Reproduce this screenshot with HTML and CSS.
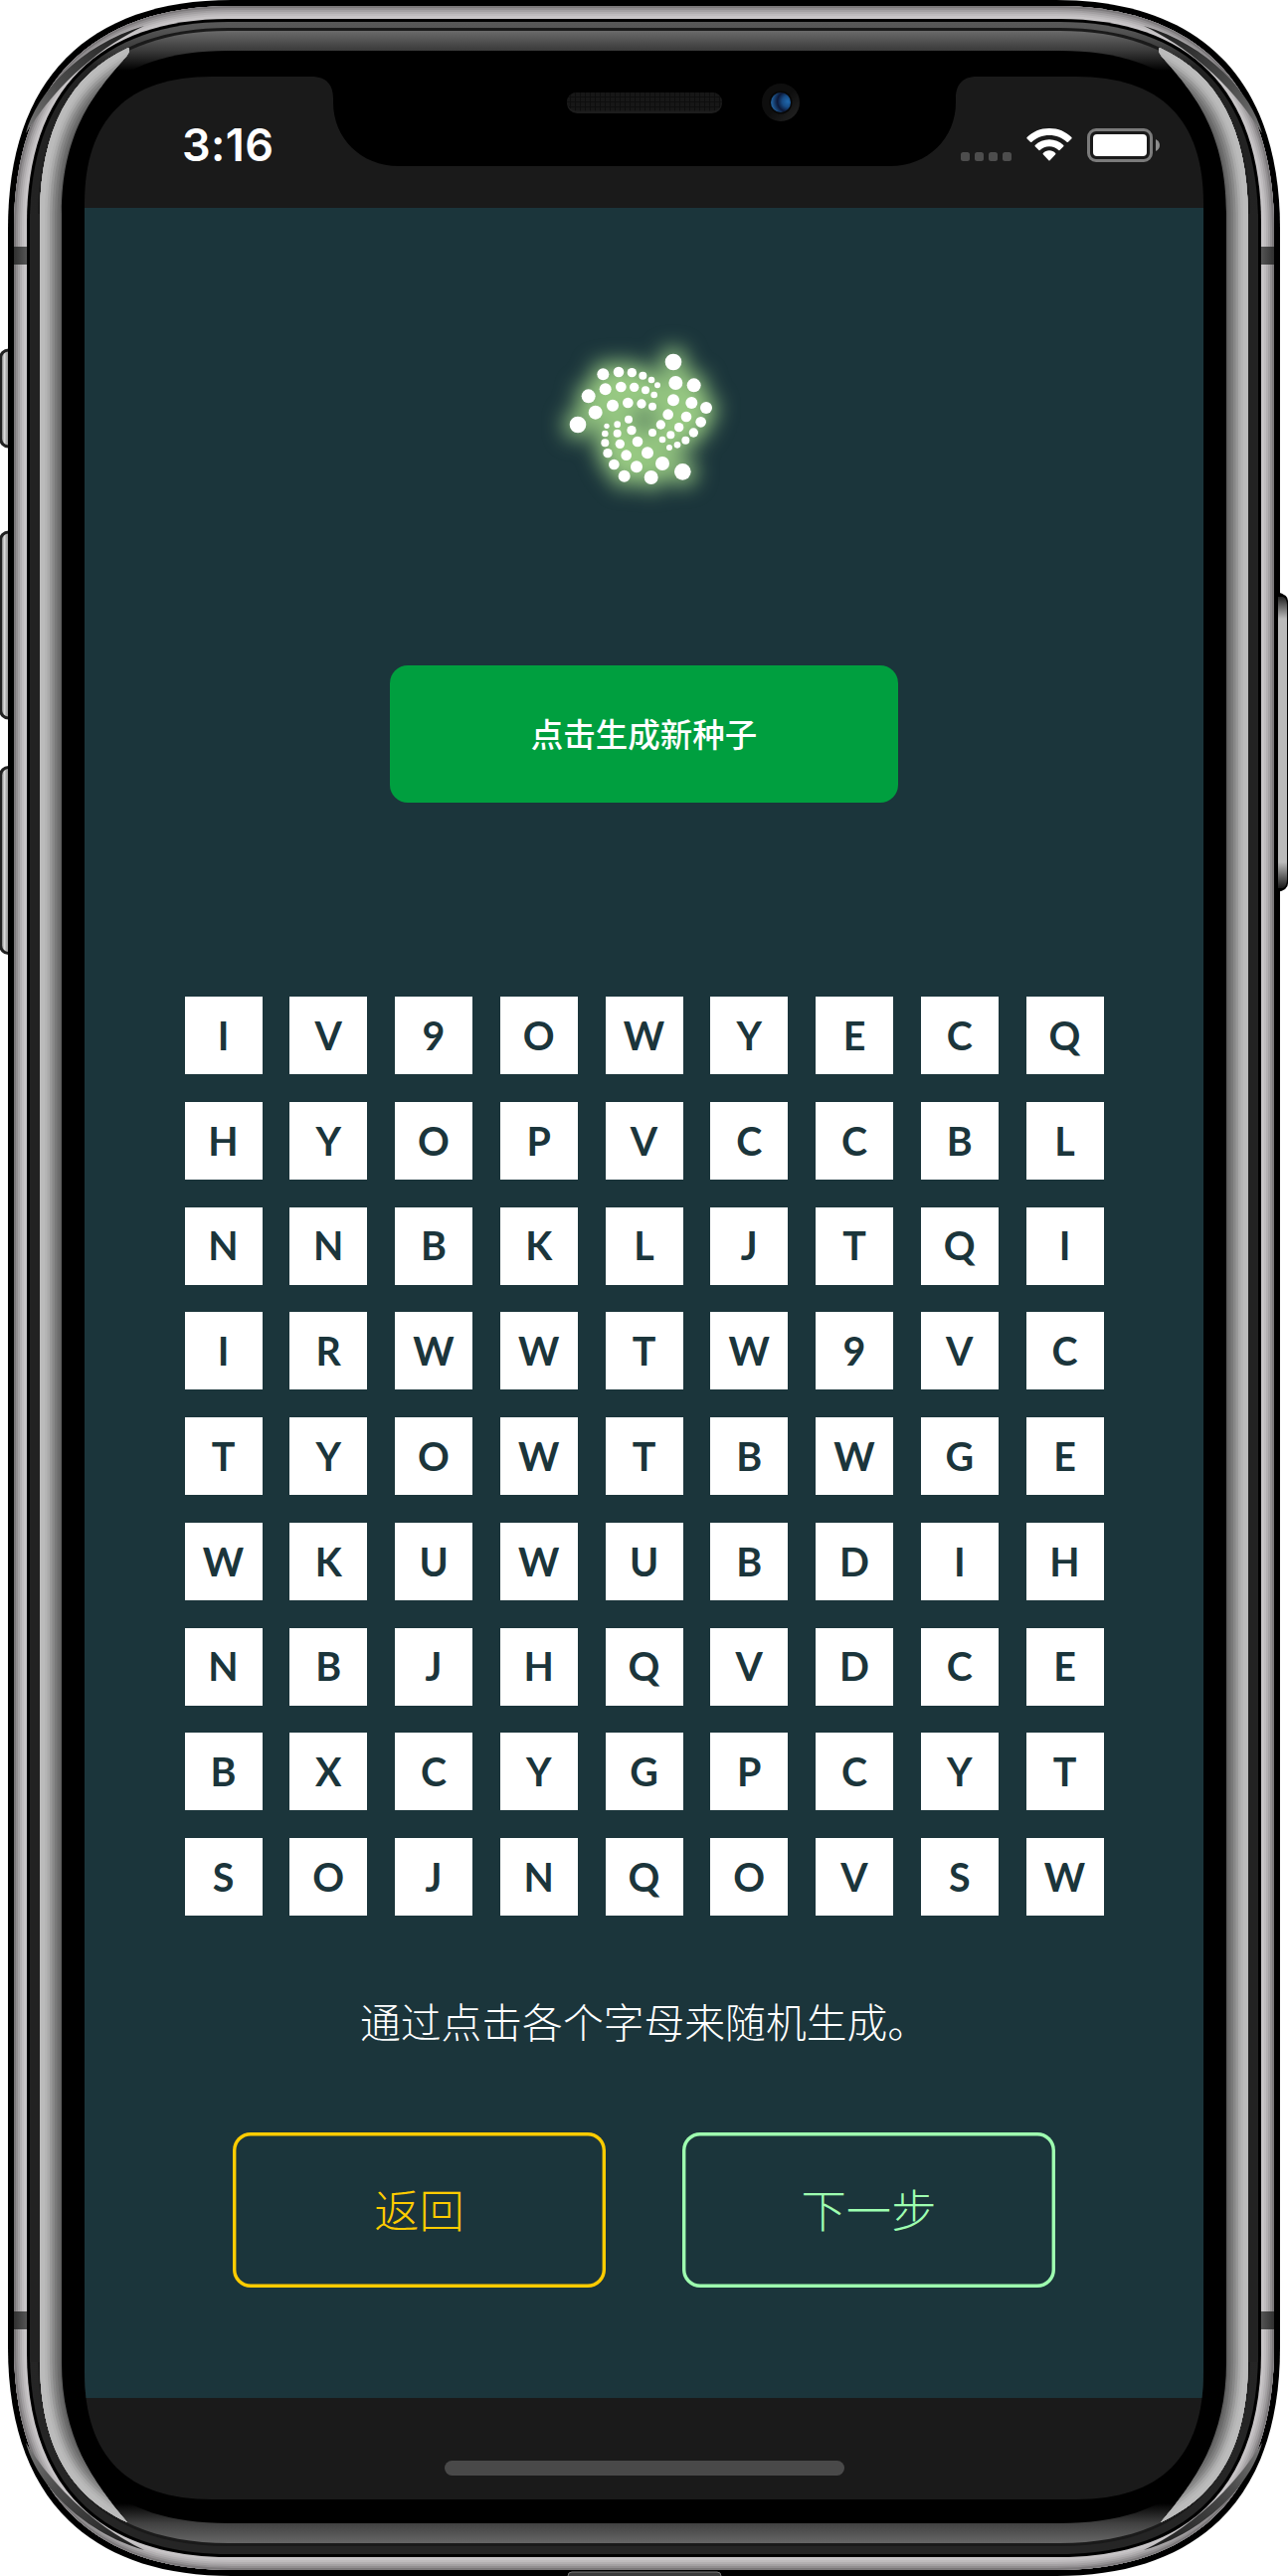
FILE: index.html
```html
<!DOCTYPE html>
<html lang="zh-CN">
<head>
<meta charset="utf-8">
<title>Seed</title>
<link rel="stylesheet" href="styles.css">
</head>
<body>
<main class="phone">
  <svg class="frame" viewBox="0 0 1295 2590" aria-hidden="true">
    <defs>
      <linearGradient id="gD" x1="0" y1="22" x2="0" y2="2568" gradientUnits="userSpaceOnUse">
        <stop offset="0" stop-color="#585858"/><stop offset=".003" stop-color="#555"/><stop offset=".018" stop-color="#222"/><stop offset="1" stop-color="#252525"/>
      </linearGradient>
      <linearGradient id="gTop" x1="0" y1="31" x2="0" y2="71" gradientUnits="userSpaceOnUse">
        <stop offset="0" stop-color="#6a6a6a"/><stop offset=".5" stop-color="#3a3a3a"/><stop offset="1" stop-color="#000"/>
      </linearGradient>
      <linearGradient id="gBot" x1="0" y1="2557" x2="0" y2="2517" gradientUnits="userSpaceOnUse">
        <stop offset="0" stop-color="#666"/><stop offset=".5" stop-color="#414141"/><stop offset="1" stop-color="#000"/>
      </linearGradient>
      <linearGradient id="gKey" x1="0" y1="0" x2="11" y2="0" gradientUnits="userSpaceOnUse">
        <stop offset="0" stop-color="#333"/><stop offset=".2" stop-color="#888"/><stop offset=".4" stop-color="#ddd"/><stop offset=".6" stop-color="#aaa"/><stop offset=".9" stop-color="#888"/><stop offset="1" stop-color="#333"/>
      </linearGradient>
      <linearGradient id="gPow" x1="0" y1="595" x2="0" y2="897" gradientUnits="userSpaceOnUse">
        <stop offset="0" stop-color="#000"/><stop offset=".09" stop-color="#bbb"/><stop offset=".9" stop-color="#bbb"/><stop offset="1" stop-color="#000"/>
      </linearGradient>
      <linearGradient id="gWedge" x1="26" y1="134" x2="140" y2="30" gradientUnits="userSpaceOnUse">
        <stop offset="0" stop-color="#777"/><stop offset=".35" stop-color="#4c4c4c"/><stop offset="1" stop-color="#1c1c1c"/>
      </linearGradient>
      <linearGradient id="gBand" x1="14" y1="0" x2="27" y2="0" gradientUnits="userSpaceOnUse">
        <stop offset="0" stop-color="#303030"/><stop offset="1" stop-color="#555"/>
      </linearGradient>
      <path id="pB" d="M14 230C14 84 92 6 233 6H1062C1203 6 1281 84 1281 230V2360C1281 2506 1203 2584 1062 2584H233C92 2584 14 2506 14 2360Z"/>
      <path id="pWedge" d="M26 134C36 95 80 45 145 26C105 45 60 80 26 134Z"/>
      <path id="pEdge" d="M131 47C70 75 41 130 40 215V2375C41 2460 70 2509 130 2537"/>
      <clipPath id="cB"><use href="#pB"/></clipPath>
      <clipPath id="cSide"><path d="M40 215C41 130 70 75 129 48Q132 51 126 58C93 95 62 135 62 215V2375C62 2450 93 2495 128 2536C70 2509 41 2460 40 2375Z"/></clipPath>
    </defs>

    <!-- volume and mute keys -->
    <g fill="url(#gKey)" stroke="#222" stroke-width="3">
      <rect x="0.5" y="352" width="20" height="97" rx="8"/>
      <rect x="0.5" y="535" width="20" height="187" rx="8"/>
      <rect x="0.5" y="771.500" width="20" height="187" rx="8"/>
    </g>

    <!-- steel body -->
    <path d="M8 230C8 80 88 0 233 0H1062C1207 0 1287 80 1287 230V2360C1287 2510 1207 2590 1062 2590H233C88 2590 8 2510 8 2360Z"/>
    <path d="M1284 595Q1295 598 1295 604V888Q1295 895 1284 897Z"/>
    <path d="M1285 600H1290Q1294 602 1294 608V884Q1294 891 1290 893H1285Z" fill="url(#gPow)"/>
    <path d="M11 345V455M11 528V729M11 765V965" stroke="#777" stroke-width="0"/>
    <g clip-path="url(#cB)" fill="none">
      <use href="#pB" fill="#c8c5c7"/>
      <use href="#pB" stroke="#bfbcbe" stroke-width="20"/>
      <use href="#pB" stroke="#b2afb1" stroke-width="16"/>
      <use href="#pB" stroke="#a3a0a2" stroke-width="12"/>
      <use href="#pB" stroke="#918e90" stroke-width="8"/>
      <use href="#pB" stroke="#7b787a" stroke-width="4"/>
    </g>
    <g fill="url(#gBand)">
      <path id="bands" d="M14 248h13v18h-13zM14 2324h13v18h-13z"/>
      <use href="#bands" transform="matrix(-1 0 0 1 1295 0)"/>
    </g>
    <g fill="url(#gWedge)">
      <use href="#pWedge"/>
      <use href="#pWedge" transform="matrix(-1 0 0 1 1295 0)"/>
      <use href="#pWedge" transform="matrix(1 0 0 -1 0 2590)"/>
      <use href="#pWedge" transform="matrix(-1 0 0 -1 1295 2590)"/>
    </g>
    <path d="M27 225C27 91 99 19 230 19H1065C1196 19 1268 91 1268 225V2365C1268 2499 1196 2571 1065 2571H230C99 2571 27 2499 27 2365Z"/>
    <path fill="url(#gD)" d="M30 225C30 93 101 22 230 22H1065C1194 22 1265 93 1265 225V2365C1265 2497 1194 2568 1065 2568H230C101 2568 30 2497 30 2365Z"/>
    <path fill="#1a1a1a" d="M38 220C38 96 104 28 230 28H1065C1191 28 1257 96 1257 220V2365C1257 2492 1191 2560 1065 2560H230C104 2560 38 2492 38 2365Z"/>
    <path fill="#222" d="M30 215H60V2375H30zM1235 215H1265V2375H1235z"/>
    <path fill="url(#gTop)" d="M40 220C40 98 106 31 230 31H1065C1189 31 1255 98 1255 220V300H40Z"/>
    <path fill="url(#gBot)" d="M40 2370C40 2490 106 2557 230 2557H1065C1189 2557 1255 2490 1255 2370V2300H40Z"/>
    <path d="M62 220C62 110 110 51 230 51H1065C1185 51 1233 110 1233 220V2370C1233 2480 1185 2537 1065 2537H230C110 2537 62 2480 62 2370Z"/>

    <!-- polished side rails -->
    <g id="rail" clip-path="url(#cSide)" fill="none">
      <path fill="#606060" d="M30 30H150V2560H30z"/>
      <use href="#pEdge" stroke="#6c6c6c" stroke-width="40"/>
      <use href="#pEdge" stroke="#7a7a7a" stroke-width="35"/>
      <use href="#pEdge" stroke="#888" stroke-width="30"/>
      <use href="#pEdge" stroke="#999" stroke-width="25"/>
      <use href="#pEdge" stroke="#aaa" stroke-width="20"/>
      <use href="#pEdge" stroke="#b5b5b5" stroke-width="15"/>
      <use href="#pEdge" stroke="#bbb" stroke-width="10"/>
    </g>
    <use href="#rail" transform="matrix(-1 0 0 1 1295 0)"/>
    <rect x="571" y="2586" width="154" height="12" rx="4" fill="#3a3a3a" stroke="#777"/>
  </svg>

  <div class="screen">
    <header class="status">
      <span class="time">3:16</span>
      <svg class="notch" width="669" height="90" viewBox="0 0 669 90" aria-hidden="true">
        <defs>
          <pattern id="mesh" width="5" height="5" patternUnits="userSpaceOnUse"><rect width="5" height="5" fill="#171717"/><path d="M0 0H5M0 0V5" stroke="#0e0e0e" stroke-width="2"/></pattern>
          <radialGradient id="lens" cx=".85" cy=".45" r=".8"><stop offset="0" stop-color="#1f68ad"/><stop offset=".35" stop-color="#174b85"/><stop offset=".65" stop-color="#0c1838"/><stop offset="1" stop-color="#205d98"/></radialGradient>
          <linearGradient id="ring" x1="0" y1="0" x2="1" y2="1"><stop offset=".5" stop-color="#0e0e0e"/><stop offset="1" stop-color="#262626"/></linearGradient>
        </defs>
        <path d="M0 0C16 0 22 9 22 22V26C22 62 50 90 88 90H582C620 90 648 62 648 26V22C648 9 654 0 669 0Z"/>
        <rect x="257" y="16" width="156" height="21" rx="10.500" fill="#1d1d1d"/>
        <rect x="257" y="16" width="156" height="18.500" rx="9.200" fill="url(#mesh)"/>
        <circle cx="472" cy="26" r="19" fill="url(#ring)"/>
        <circle cx="472" cy="26" r="11.500" fill="#070707"/>
        <circle cx="472" cy="26" r="10" fill="url(#lens)"/>
      </svg>
      <svg class="indicators" width="202" height="36" viewBox="965 128 202 36" aria-hidden="true">
        <g fill="#4d4d4d"><rect x="966" y="153" width="9" height="9" rx="2.500"/><rect x="980" y="153" width="9" height="9" rx="2.500"/><rect x="994" y="153" width="9" height="9" rx="2.500"/><rect x="1008" y="153" width="9" height="9" rx="2.500"/></g>
        <g fill="#fff">
          <path d="M1055 129C1046 129 1038.500 132.300 1032.600 138Q1032 138.700 1032.600 139.400L1036 142.800Q1036.700 143.400 1037.400 142.800C1042 138.500 1048 136 1055 136C1062 136 1068 138.500 1072.600 142.800Q1073.300 143.400 1074 142.800L1077.400 139.400Q1078 138.700 1077.400 138C1071.500 132.300 1064 129 1055 129Z"/>
          <path d="M1055 140.200C1049.500 140.200 1044.500 142.300 1040.700 146Q1040.200 146.600 1040.700 147.200L1044.500 151Q1045 151.500 1045.600 151C1048 148.700 1051.400 147.300 1055 147.300C1058.600 147.300 1062 148.700 1064.400 151Q1065 151.500 1065.500 151L1069.300 147.200Q1069.800 146.600 1069.300 146C1065.500 142.300 1060.500 140.200 1055 140.200Z"/>
          <path d="M1055 151.300C1052.500 151.300 1050.500 152.200 1048.800 153.900Q1048.200 154.600 1048.800 155.200L1054.400 161.200Q1055 161.800 1055.600 161.200L1061.200 155.200Q1061.800 154.600 1061.200 153.900C1059.500 152.200 1057.500 151.300 1055 151.300Z"/>
          <rect x="1099" y="135" width="54" height="22" rx="4"/>
        </g>
        <rect x="1094.500" y="130.500" width="63" height="31" rx="7.500" fill="none" stroke="#7b7b7b" stroke-width="3"/>
        <path d="M1162 140Q1166 142 1166 146T1162 152Z" fill="#8c8c8c"/>
      </svg>
    </header>

    <section class="app">
      <svg class="logo" width="220" height="200" viewBox="0 0 660 600" aria-label="IOTA">
        <defs>
          <filter id="glow" x="-40%" y="-40%" width="180%" height="180%" color-interpolation-filters="sRGB"><feGaussianBlur stdDeviation="32"/></filter>
          <g id="dots">
            <circle cx="199" cy="169" r="18"/><circle cx="246" cy="162" r="16"/><circle cx="286" cy="164" r="14"/><circle cx="319" cy="173" r="12"/><circle cx="345" cy="186" r="10"/><circle cx="363" cy="202" r="9"/>
            <circle cx="155" cy="235" r="21"/><circle cx="206" cy="214" r="18"/><circle cx="253" cy="207" r="16"/><circle cx="293" cy="208" r="14"/><circle cx="327" cy="217" r="12"/><circle cx="353" cy="231" r="10"/>
            <circle cx="123" cy="321" r="25"/><circle cx="176" cy="284" r="21"/><circle cx="228" cy="263" r="18"/><circle cx="274" cy="255" r="16"/><circle cx="315" cy="258" r="14"/><circle cx="348" cy="266" r="12"/>
            <circle cx="411" cy="132" r="25"/><circle cx="418" cy="195" r="21"/><circle cx="411" cy="247" r="18"/><circle cx="395" cy="290" r="16"/><circle cx="373" cy="321" r="14"/><circle cx="348" cy="345" r="12"/>
            <circle cx="473" cy="202" r="21"/><circle cx="466" cy="255" r="18"/><circle cx="450" cy="297" r="16"/><circle cx="428" cy="329" r="14"/><circle cx="403" cy="352" r="12"/><circle cx="378" cy="366" r="10"/>
            <circle cx="510" cy="270" r="18"/><circle cx="494" cy="313" r="16"/><circle cx="472" cy="345" r="14"/><circle cx="448" cy="368" r="12"/><circle cx="423" cy="382" r="10"/><circle cx="399" cy="390" r="9"/>
            <circle cx="439" cy="463" r="25"/><circle cx="378" cy="438" r="21"/><circle cx="333" cy="406" r="18"/><circle cx="303" cy="372" r="16"/><circle cx="285" cy="338" r="14"/><circle cx="276" cy="305" r="12"/>
            <circle cx="344" cy="480" r="21"/><circle cx="300" cy="448" r="18"/><circle cx="269" cy="413" r="16"/><circle cx="250" cy="379" r="14"/><circle cx="242" cy="347" r="12"/><circle cx="242" cy="320" r="10"/>
            <circle cx="263" cy="476" r="18"/><circle cx="232" cy="441" r="16"/><circle cx="213" cy="407" r="14"/><circle cx="205" cy="376" r="12"/><circle cx="205" cy="348" r="10"/><circle cx="210" cy="325" r="8"/>
          </g>
        </defs>
        <use href="#dots" filter="url(#glow)" fill="#98ca83" stroke="#98ca83" stroke-width="32"/>
        <use href="#dots" fill="#fff"/>
      </svg>

      <button class="generate">点击生成新种子</button>

      <div class="seed">
        <span>I</span><span>V</span><span>9</span><span>O</span><span>W</span><span>Y</span><span>E</span><span>C</span><span>Q</span>
        <span>H</span><span>Y</span><span>O</span><span>P</span><span>V</span><span>C</span><span>C</span><span>B</span><span>L</span>
        <span>N</span><span>N</span><span>B</span><span>K</span><span>L</span><span>J</span><span>T</span><span>Q</span><span>I</span>
        <span>I</span><span>R</span><span>W</span><span>W</span><span>T</span><span>W</span><span>9</span><span>V</span><span>C</span>
        <span>T</span><span>Y</span><span>O</span><span>W</span><span>T</span><span>B</span><span>W</span><span>G</span><span>E</span>
        <span>W</span><span>K</span><span>U</span><span>W</span><span>U</span><span>B</span><span>D</span><span>I</span><span>H</span>
        <span>N</span><span>B</span><span>J</span><span>H</span><span>Q</span><span>V</span><span>D</span><span>C</span><span>E</span>
        <span>B</span><span>X</span><span>C</span><span>Y</span><span>G</span><span>P</span><span>C</span><span>Y</span><span>T</span>
        <span>S</span><span>O</span><span>J</span><span>N</span><span>Q</span><span>O</span><span>V</span><span>S</span><span>W</span>
      </div>

      <p class="hint">通过点击各个字母来随机生成。</p>

      <nav class="actions">
        <button class="action back">返回</button>
        <button class="action next">下一步</button>
      </nav>
    </section>

    <footer class="home"><span class="home-bar"></span></footer>
  </div>
</main>
</body>
</html>
```
FILE: styles.css
```css
* { box-sizing: border-box; }

body { margin: 0; background: #fff; }

button { appearance: none; border: 0; padding: 0; background: none; font: inherit; }

.phone {
  display: grid;
  width: 1295px;
  height: 2590px;
  overflow: hidden;
  font-family: "Noto Sans CJK SC", sans-serif;
}

.frame, .screen { grid-area: 1 / 1; }

.frame { display: block; width: 1295px; height: 2590px; }

.screen {
  display: flex;
  flex-direction: column;
  width: 1125px;
  height: 2436px;
  margin: 77px 0 0 85px;
  background: #1a1a1a;
  clip-path: path("M0 128C0 43 43 0 128 0H997C1082 0 1125 43 1125 128V2308C1125 2393 1082 2436 997 2436H128C43 2436 0 2393 0 2308Z");
}

.status {
  display: grid;
  grid-template-columns: 228px 652px 1fr;
  height: 132px;
}

.time {
  padding: 42px 0 0 98px;
  color: #fff;
  font: 600 45px/54px Inter, sans-serif;
  letter-spacing: 0.4px;
}

.notch { display: block; }

.indicators { margin-top: 51px; }

.app {
  display: flex;
  flex-direction: column;
  align-items: center;
  height: 2202px;
  background: #1b353b;
}

.logo { margin: 111px 0 0 5px; overflow: visible; }

.generate {
  width: 511px;
  height: 138px;
  margin-top: 149px;
  padding-bottom: 4px;
  border-radius: 18px;
  background: #009f3f;
  color: #fff;
  font-size: 32.5px;
  font-weight: 500;
}

.seed {
  display: grid;
  grid-template-columns: repeat(9, 78px);
  grid-auto-rows: 78px;
  gap: 27.75px;
  margin-top: 195px;
}

.seed span {
  display: grid;
  place-items: center;
  padding-bottom: 1px;
  background: #fff;
  color: #1b353b;
  font: 700 39.4px/1 Lato, sans-serif;
}

.hint {
  margin: 76px 0 0;
  color: #fff;
  font-size: 40.8px;
  font-weight: 300;
  line-height: 60px;
}

.actions { display: flex; gap: 77px; margin-top: 82px; }

.action {
  width: 375px;
  height: 156px;
  padding-bottom: 5px;
  border-radius: 18px;
  box-shadow: inset 0 0 0 3.4px currentColor;
  font-size: 45.3px;
  font-weight: 300;
}

.back { color: #fc0; }

.next { color: #9effb0; }

.home { display: flex; justify-content: center; padding-top: 63px; }

.home-bar { width: 402px; height: 15px; border-radius: 8px; background: #494949; }
```
